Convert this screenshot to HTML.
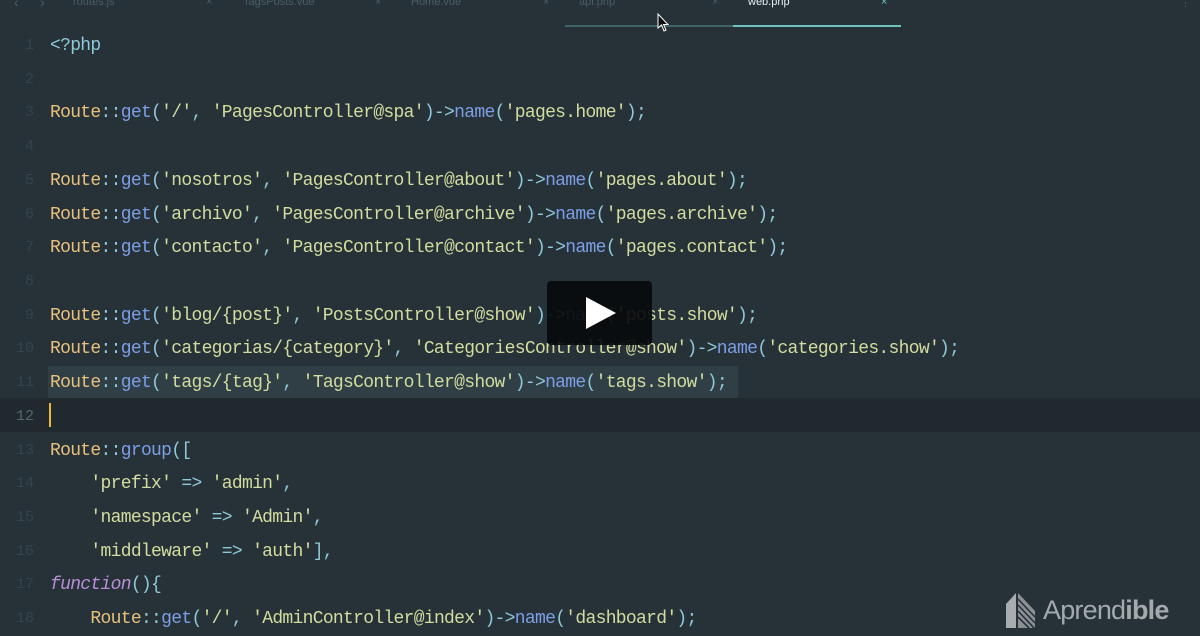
<!DOCTYPE html>
<html><head><meta charset="utf-8"><style>
html,body{margin:0;padding:0}
body{width:1200px;height:628px;background:#263238;position:relative;overflow:hidden;font-family:"Liberation Mono",monospace}
.tabs{position:absolute;left:0;top:0;width:1200px;height:28px;background:#263238;font-family:"Liberation Sans",sans-serif;font-size:11px;color:#4a5e66}
.tabs span{position:absolute;top:-4px}
.l{position:absolute;left:0;height:34px;line-height:34px;width:1200px;white-space:pre;font-size:18px;letter-spacing:-0.7px}
.n{position:absolute;left:0;width:34px;text-align:right;color:#34444b;font-size:15px;letter-spacing:0}
.c{position:absolute;left:50px;color:#8fc8d8}
.k{color:#e8c07d}.f{color:#7d9ee6}.s{color:#d2dc9f}.p{color:#8fc8d8}.i{color:#b98fd6;font-style:italic}
</style></head><body>
<div class="tabs">
<span style="left:14px;font-size:14px;top:-6px">‹</span><span style="left:40px;font-size:14px;top:-6px">›</span>
<span style="left:73px">routes.js</span><span style="left:206px">×</span>
<span style="left:243px">TagsPosts.vue</span><span style="left:375px">×</span>
<span style="left:411px">Home.vue</span><span style="left:543px">×</span>
<span style="left:579px">api.php</span><span style="left:712px">×</span>
<span style="left:748px;color:#e8eef0">web.php</span><span style="left:881px;color:#6fc1c0">×</span>
<span style="left:1180px;top:-4px">⋮</span>
</div>
<div style="position:absolute;left:565px;top:25px;width:168px;height:2px;background:#3f6468"></div>
<div style="position:absolute;left:733px;top:25px;width:168px;height:2px;background:#6fc1bd"></div>
<svg style="position:absolute;left:657px;top:13px" width="12" height="20" viewBox="0 0 12 20"><path d="M1 1 L1 15 L4.5 12 L7 18 L9 17 L6.5 11.5 L11 11.5 Z" fill="#111" stroke="#fff" stroke-width="1"/></svg>

<div style="position:absolute;left:0;top:398px;width:1200px;height:34px;background:#1f292e"></div>
<div style="position:absolute;left:48px;top:366px;width:690px;height:32px;background:#2f3f45"></div>
<div style="position:absolute;left:49px;top:403px;width:2px;height:24px;background:#f0b73c"></div>

<div style="padding-top:2px;position:absolute;left:0;top:0;width:1200px;height:628px">
<div style="position:relative">
<div class="l" style="top:27px"><span class="n">1</span><span class="c">&lt;?php</span></div>
<div class="l" style="top:61px"><span class="n">2</span></div>
<div class="l" style="top:94px"><span class="n">3</span><span class="c"><span class="k">Route</span>::<span class="f">get</span>(<span class="s">'/'</span>, <span class="s">'PagesController@spa'</span>)-&gt;<span class="f">name</span>(<span class="s">'pages.home'</span>);</span></div>
<div class="l" style="top:128px"><span class="n">4</span></div>
<div class="l" style="top:162px"><span class="n">5</span><span class="c"><span class="k">Route</span>::<span class="f">get</span>(<span class="s">'nosotros'</span>, <span class="s">'PagesController@about'</span>)-&gt;<span class="f">name</span>(<span class="s">'pages.about'</span>);</span></div>
<div class="l" style="top:196px"><span class="n">6</span><span class="c"><span class="k">Route</span>::<span class="f">get</span>(<span class="s">'archivo'</span>, <span class="s">'PagesController@archive'</span>)-&gt;<span class="f">name</span>(<span class="s">'pages.archive'</span>);</span></div>
<div class="l" style="top:229px"><span class="n">7</span><span class="c"><span class="k">Route</span>::<span class="f">get</span>(<span class="s">'contacto'</span>, <span class="s">'PagesController@contact'</span>)-&gt;<span class="f">name</span>(<span class="s">'pages.contact'</span>);</span></div>
<div class="l" style="top:263px"><span class="n">8</span></div>
<div class="l" style="top:297px"><span class="n">9</span><span class="c"><span class="k">Route</span>::<span class="f">get</span>(<span class="s">'blog/{post}'</span>, <span class="s">'PostsController@show'</span>)-&gt;<span class="f">name</span>(<span class="s">'posts.show'</span>);</span></div>
<div class="l" style="top:330px"><span class="n">10</span><span class="c"><span class="k">Route</span>::<span class="f">get</span>(<span class="s">'categorias/{category}'</span>, <span class="s">'CategoriesController@show'</span>)-&gt;<span class="f">name</span>(<span class="s">'categories.show'</span>);</span></div>
<div class="l" style="top:364px"><span class="n">11</span><span class="c"><span class="k">Route</span>::<span class="f">get</span>(<span class="s">'tags/{tag}'</span>, <span class="s">'TagsController@show'</span>)-&gt;<span class="f">name</span>(<span class="s">'tags.show'</span>);</span></div>
<div class="l" style="top:398px"><span class="n" style="color:#55666d">12</span></div>
<div class="l" style="top:432px"><span class="n">13</span><span class="c"><span class="k">Route</span>::<span class="f">group</span>([</span></div>
<div class="l" style="top:465px"><span class="n">14</span><span class="c">    <span class="s">'prefix'</span> =&gt; <span class="s">'admin'</span>,</span></div>
<div class="l" style="top:499px"><span class="n">15</span><span class="c">    <span class="s">'namespace'</span> =&gt; <span class="s">'Admin'</span>,</span></div>
<div class="l" style="top:533px"><span class="n">16</span><span class="c">    <span class="s">'middleware'</span> =&gt; <span class="s">'auth'</span>],</span></div>
<div class="l" style="top:566px"><span class="n">17</span><span class="c"><span class="i">function</span>(){</span></div>
<div class="l" style="top:600px"><span class="n">18</span><span class="c">    <span class="k">Route</span>::<span class="f">get</span>(<span class="s">'/'</span>, <span class="s">'AdminController@index'</span>)-&gt;<span class="f">name</span>(<span class="s">'dashboard'</span>);</span></div>
</div></div>

<div style="position:absolute;left:547px;top:281px;width:105px;height:64px;background:rgba(8,10,12,0.92);border-radius:4px"></div>
<svg style="position:absolute;left:586px;top:297px" width="30" height="32" viewBox="0 0 30 32"><path d="M0 0 L30 16 L0 32 Z" fill="#fff"/></svg>

<svg style="position:absolute;left:1005px;top:591px" width="32" height="37" viewBox="0 0 32 37"><path d="M1 13 L11 2 L11 37 L1 37 Z" fill="#a8adb0"/><path d="M13 2 L30 20 L30 37 L13 37 Z" fill="#8a9093"/><path d="M13 8 L30 26 M13 14 L30 32 M13 20 L30 38 M13 26 L24 37" stroke="#263238" stroke-width="1.6"/></svg>
<div style="position:absolute;left:1043px;top:595px;font-family:'Liberation Sans',sans-serif;font-size:27px;color:#a3a9ac;letter-spacing:-0.8px">Aprend<b>ible</b></div>
</body></html>
